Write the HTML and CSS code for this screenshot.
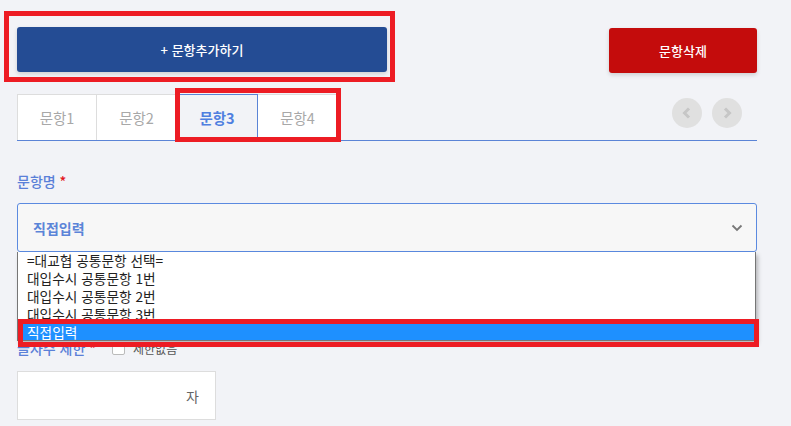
FILE: index.html
```html
<!DOCTYPE html>
<html lang="ko">
<head>
    <meta charset="UTF-8">
    <meta name="viewport" content="width=device-width, initial-scale=1.0">
    <title>문항 설정</title>
    <link rel="stylesheet" href="styles.css">
</head>
<body>

<div class="page">
    <div class="top-row">
        <button type="button" class="btn btn-add">+ 문항추가하기</button>
        <button type="button" class="btn btn-del">문항삭제</button>
    </div>

    <div class="tabs">
        <div class="tab">문항1</div>
        <div class="tab">문항2</div>
        <div class="tab active">문항3</div>
        <div class="tab">문항4</div>
        <div class="tab-nav">
            <span class="circle">
                <svg width="10" height="12" viewBox="0 0 10 12"><polyline points="7,1.5 2.5,6 7,10.5" fill="none" stroke="#c6c6c6" stroke-width="3"/></svg>
            </span>
            <span class="circle">
                <svg width="10" height="12" viewBox="0 0 10 12"><polyline points="3,1.5 7.5,6 3,10.5" fill="none" stroke="#c6c6c6" stroke-width="3"/></svg>
            </span>
        </div>
    </div>

    <p class="label">문항명 <span class="req">*</span></p>
    <div class="field">
        <div class="select">
            <span>직접입력</span>
            <svg width="12" height="8" viewBox="0 0 12 8"><polyline points="1.5,1.5 6,6 10.5,1.5" fill="none" stroke="#777" stroke-width="1.8"/></svg>
        </div>
        <div class="dropdown">
            <div class="options">
                <div class="option">=대교협 공통문항 선택=</div>
                <div class="option">대입수시 공통문항 1번</div>
                <div class="option">대입수시 공통문항 2번</div>
                <div class="option">대입수시 공통문항 3번</div>
                <div class="option selected">직접입력</div>
            </div>
        </div>
    </div>

    <div class="label-row">
        <p class="label">글자수 제한 <span class="req">*</span></p>
        <label class="check"><span class="box"></span>제한없음</label>
    </div>
    <div class="count-input"><span>자</span></div>

    <!-- annotation boxes -->
    <div class="mark mark-add"></div>
    <div class="mark mark-tab"></div>
    <div class="mark mark-opt"></div>
</div>

</body>
</html>
```

FILE: styles.css
```css
body { margin: 0; background: #f2f3f7; font-family: "Noto Sans CJK KR", "Noto Sans", sans-serif; }
.page { position: relative; width: 740px; padding: 27px 34px 0 17px; height: 399px; overflow: hidden; }

.top-row { display: flex; justify-content: space-between; }
.btn { height: 45px; border: none; border-radius: 3px; color: #fff; font-family: inherit; font-size: 13px; font-weight: 500; box-shadow: 0 2px 4px rgba(0,0,0,0.15); }
.btn-add { width: 370px; background: #244c94; }
.btn-del { width: 148px; background: #c40c0c; margin-top: 1px; }

.tabs { display: flex; margin-top: 21px; height: 46px; border-bottom: 1px solid #5b84d6; }
.tab { width: 81px; box-sizing: border-box; display: flex; align-items: center; justify-content: center; background: #fff; border: 1px solid #ddd; border-bottom: none; margin-left: -1px; font-size: 14.5px; color: #a8a8a8; }
.tab:first-child { width: 80px; margin-left: 0; }
.tab.active { width: 82px; background: #f2f3f7; border-color: #5b84d6; color: #4f7fe0; font-weight: 700; position: relative; z-index: 1; }
.tab-nav { margin-left: auto; display: flex; gap: 10px; padding: 4px 15px 0 0; }
.circle { width: 30px; height: 30px; border-radius: 50%; background: #e0e0e0; display: flex; align-items: center; justify-content: center; }

.label { margin: 0; font-size: 14px; font-weight: 500; color: #5a80d8; line-height: 22px; }
.req { color: #e3141d; }
.tabs + .label { margin-top: 29px; }

.field { position: relative; margin-top: 11px; }
.select { height: 49px; box-sizing: border-box; border: 1px solid #5b8ae0; border-radius: 3px; background: #f7f7f7; display: flex; align-items: center; justify-content: space-between; padding: 0 13px 0 15px; font-size: 14px; font-weight: 700; color: #5b84d8; }
.dropdown { position: absolute; left: 0; top: 49px; width: 739px; height: 89px; box-sizing: border-box; border: 1px solid #767676; border-top: none; background: #fff; box-shadow: 2px 3px 4px rgba(0,0,0,0.25); overflow: hidden; z-index: 2; }
.options { margin-top: -1px; }
.option { height: 18px; line-height: 18px; padding-left: 9px; font-size: 13.7px; color: #222; }
.option.selected { background: #1e90ff; color: #fff; }

.label-row { display: flex; align-items: center; margin-top: 85px; }
.check { display: flex; align-items: center; margin-left: 16px; font-size: 12px; color: #555; }
.box { width: 11px; height: 11px; border: 1px solid #bbb; border-radius: 2px; background: #fff; margin-right: 8px; }

.count-input { width: 199px; height: 49px; box-sizing: border-box; margin-top: 12px; background: #fff; border: 1px solid #ddd; display: flex; align-items: center; justify-content: flex-end; padding-right: 16px; font-size: 14px; color: #666; }

.mark { position: absolute; border: 5px solid #ed1c24; box-sizing: border-box; z-index: 3; }
.mark-add { left: 4px; top: 11px; width: 391px; height: 71px; }
.mark-tab { left: 175px; top: 88px; width: 166px; height: 54px; }
.mark-opt { left: 18px; top: 319px; width: 741px; height: 28px; }
```
